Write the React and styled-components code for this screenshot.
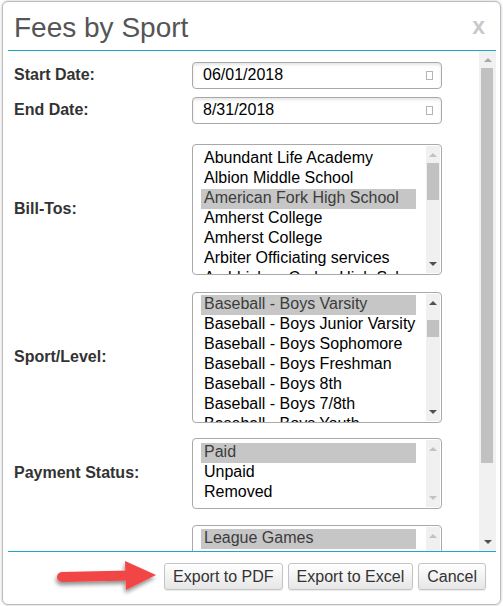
import React from "react";
import styled, { createGlobalStyle } from "styled-components";

const Global = createGlobalStyle`
  html, body { margin: 0; padding: 0; background: #ffffff; }
  body { font-family: "Liberation Sans", Arial, sans-serif; overflow: hidden; }
  * { box-sizing: border-box; }
`;

const Page = styled.div`
  width: 503px;
  height: 606px;
  padding: 1px 2px 1px 2px;
  background: #ffffff;
`;

const Dialog = styled.div`
  width: 499px;
  height: 604px;
  border: 1px solid #bdbdbd;
  border-radius: 6px;
  background: #ffffff;
  box-shadow: 0 0 3px rgba(0, 0, 0, 0.25);
  display: flex;
  flex-direction: column;
  overflow: hidden;
`;

const Header = styled.div`
  margin: 0 4px 0 5px;
  height: 49px;
  border-bottom: 1px solid #1ba9c9;
  display: flex;
  align-items: flex-start;
  justify-content: space-between;
  flex: none;
`;

const Title = styled.h1`
  margin: 10px 0 0 6px;
  font-size: 28px;
  font-weight: normal;
  line-height: 32px;
  color: #555555;
`;

const Close = styled.span`
  margin: 11px 11px 0 0;
  font-size: 23px;
  font-weight: bold;
  line-height: 26px;
  color: #c9c9c9;
`;

const BodyWrap = styled.div`
  margin: 0 4px 0 5px;
  height: 500px;
  display: flex;
  flex: none;
`;

const Content = styled.div`
  flex: 1;
  overflow: hidden;
  padding: 11px 0 0 6px;
`;

const Row = styled.div`
  display: grid;
  grid-template-columns: 178px 250px;
  align-items: center;
  margin-top: ${(p) => p.$gap || 0}px;
`;

const Label = styled.label`
  font-size: 16px;
  font-weight: bold;
  color: #333333;
  padding-bottom: 2px;
`;

const DateBox = styled.div`
  height: 27px;
  border: 1px solid #a9a9a9;
  border-radius: 4px;
  box-shadow: inset 0 2px 3px rgba(0, 0, 0, 0.1);
  display: flex;
  align-items: center;
  justify-content: space-between;
  padding: 0 8px 2px 10px;
  font-size: 16px;
  color: #000000;
`;

const CalGlyph = styled.span`
  width: 7px;
  height: 9px;
  margin-top: 2px;
  border: 1px solid #b4b4b4;
`;

const ListBox = styled.div`
  height: ${(p) => p.$h}px;
  border: 1px solid #a9a9a9;
  border-radius: 4px;
  display: flex;
  overflow: hidden;
  padding-left: 8px;
`;

const Options = styled.div`
  width: 215px;
  padding-top: ${(p) => p.$top}px;
  overflow: hidden;
`;

const Option = styled.div`
  height: 20px;
  line-height: 17px;
  padding-left: 3px;
  font-size: 16px;
  white-space: nowrap;
  color: ${(p) => (p.$sel ? "#3c3c3c" : "#000000")};
  background: ${(p) => (p.$sel ? "#c6c6c6" : "transparent")};
`;

const MiniBar = styled.div`
  position: relative;
  margin: 1px 0 1px 10px;
  width: 14px;
  background: #f0f0f0;
`;

const Tri = styled.div`
  position: absolute;
  left: 50%;
  margin-left: -4px;
  width: 0;
  height: 0;
  border-left: 4px solid transparent;
  border-right: 4px solid transparent;
  ${(p) =>
    p.$down
      ? `bottom: 7px; border-top: 4px solid ${p.$on ? "#505050" : "#c2c2c2"};`
      : `top: 7px; border-bottom: 4px solid ${p.$on ? "#505050" : "#c2c2c2"};`}
`;

const Thumb = styled.div`
  position: absolute;
  left: 1px;
  right: 1px;
  background: #c1c1c1;
`;

const MainBar = styled.div`
  position: relative;
  width: 17px;
  background: #f1f1f1;
  flex: none;
`;

const Footer = styled.div`
  position: relative;
  margin: 0 4px 0 5px;
  border-top: 1px solid #1ba9c9;
  display: flex;
  justify-content: flex-end;
  gap: 5px;
  padding: 11px 10px 0 0;
  flex: 1;
`;

const Button = styled.button`
  height: 27px;
  padding: 0 8px;
  border: 1px solid #c4c4c4;
  border-radius: 3px;
  background: linear-gradient(#ffffff, #e6e6e6);
  font-family: "Liberation Sans", Arial, sans-serif;
  font-size: 16px;
  color: #333333;
  box-shadow: 0 1px 1px rgba(0, 0, 0, 0.08);
`;

const Arrow = styled.svg`
  position: absolute;
  left: 44px;
  top: 8px;
  overflow: visible;
`;

function List({ h, top = 4, items, sel, thumb, up, down }) {
  return (
    <ListBox $h={h}>
      <Options $top={top}>
        {items.map((t, i) => (
          <Option key={i} $sel={i === sel}>
            {t}
          </Option>
        ))}
      </Options>
      <MiniBar>
        <Tri $on={up} />
        {thumb && <Thumb style={{ top: thumb[0], height: thumb[1] }} />}
        <Tri $down $on={down} />
      </MiniBar>
    </ListBox>
  );
}

export default function App() {
  return (
    <Page>
      <Global />
      <Dialog>
        <Header>
          <Title>Fees by Sport</Title>
          <Close>x</Close>
        </Header>
        <BodyWrap>
          <Content>
            <Row>
              <Label>Start Date:</Label>
              <DateBox>
                06/01/2018
                <CalGlyph />
              </DateBox>
            </Row>
            <Row $gap={8}>
              <Label>End Date:</Label>
              <DateBox>
                8/31/2018
                <CalGlyph />
              </DateBox>
            </Row>
            <Row $gap={20}>
              <Label>Bill-Tos:</Label>
              <List
                h={131}
                sel={2}
                thumb={[17, 37]}
                up={false}
                down
                items={[
                  "Abundant Life Academy",
                  "Albion Middle School",
                  "American Fork High School",
                  "Amherst College",
                  "Amherst College",
                  "Arbiter Officiating services",
                  "Archbishop Carlos High School",
                ]}
              />
            </Row>
            <Row $gap={17}>
              <Label>Sport/Level:</Label>
              <List
                h={131}
                top={2}
                sel={0}
                thumb={[26, 17]}
                up
                down
                items={[
                  "Baseball - Boys Varsity",
                  "Baseball - Boys Junior Varsity",
                  "Baseball - Boys Sophomore",
                  "Baseball - Boys Freshman",
                  "Baseball - Boys 8th",
                  "Baseball - Boys 7/8th",
                  "Baseball - Boys Youth",
                ]}
              />
            </Row>
            <Row $gap={15}>
              <Label>Payment Status:</Label>
              <List
                h={71}
                sel={0}
                up={false}
                down={false}
                items={["Paid", "Unpaid", "Removed"]}
              />
            </Row>
            <Row $gap={16}>
              <Label></Label>
              <List
                h={131}
                top={3}
                sel={0}
                up={false}
                down
                items={["League Games", "Tournament Games", "Scrimmages"]}
              />
            </Row>
          </Content>
          <MainBar>
            <Tri $on={false} style={{ borderBottomColor: "#a8a8a8" }} />
            <Thumb style={{ top: 17, height: 395, left: 2, right: 3 }} />
            <Tri $down $on />
          </MainBar>
        </BodyWrap>
        <Footer>
          <Arrow width="106" height="34" viewBox="0 0 106 34">
            <defs>
              <filter id="sh" x="-20%" y="-40%" width="140%" height="180%">
                <feGaussianBlur in="SourceAlpha" stdDeviation="2" />
                <feOffset dx="-1" dy="3" result="b" />
                <feComponentTransfer>
                  <feFuncA type="linear" slope="0.45" />
                </feComponentTransfer>
                <feMerge>
                  <feMergeNode />
                  <feMergeNode in="SourceGraphic" />
                </feMerge>
              </filter>
            </defs>
            <g filter="url(#sh)">
              <line
                x1="10"
                y1="17"
                x2="78"
                y2="15.5"
                stroke="#f24444"
                strokeWidth="10"
                strokeLinecap="round"
              />
              <polygon points="73,1 104,15 74,30" fill="#f24444" />
            </g>
          </Arrow>
          <Button>Export to PDF</Button>
          <Button>Export to Excel</Button>
          <Button>Cancel</Button>
        </Footer>
      </Dialog>
    </Page>
  );
}
